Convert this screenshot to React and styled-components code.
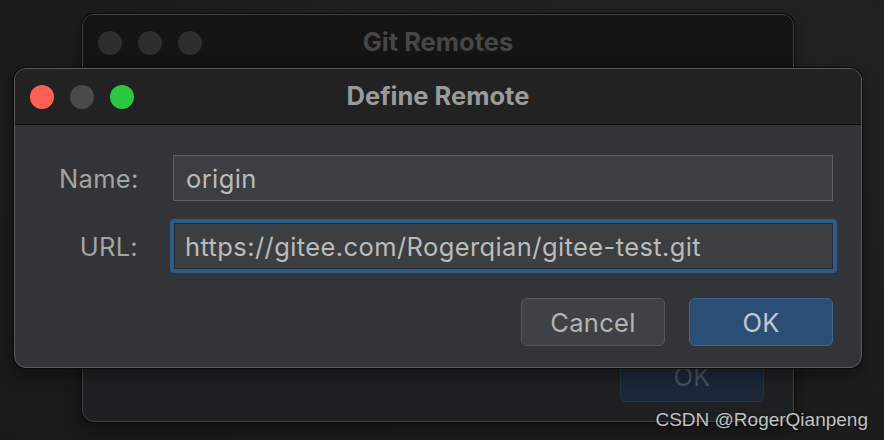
import React from "react"
import styled, { createGlobalStyle } from "styled-components"

const Global = createGlobalStyle`
  html, body {
    margin: 0;
    padding: 0;
    background: #1d1d1d;
  }
  body {
    font-family: Inter, "Noto Sans", "Liberation Sans", sans-serif;
  }
`

const Desktop = styled.div`
  position: relative;
  width: 884px;
  height: 440px;
  overflow: hidden;
  background: radial-gradient(ellipse at 75% 20%, #252525 0%, #1e1e1e 45%, #191919 100%);
`

const Window = styled.div`
  position: absolute;
  left: ${p => p.x}px;
  top: ${p => p.y}px;
  width: ${p => p.w}px;
  height: ${p => p.h}px;
  display: flex;
  flex-direction: column;
  border-radius: 12px;
  overflow: hidden;
  border: 1px solid ${p => (p.front ? "#5c5c5c" : "#444")};
  box-shadow: 0 0 0 1px #0a0a0a, 0 6px 18px rgba(0, 0, 0, 0.45);
  background: ${p => (p.front ? "#323437" : "#1f2022")};
  box-sizing: border-box;
`

const TitleBar = styled.div`
  position: relative;
  height: 55px;
  flex: none;
  display: flex;
  align-items: center;
  justify-content: center;
  background: ${p => (p.front ? "#222222" : "#141414")};
  border-bottom: 1px solid #0c0c0c;
`

const Lights = styled.div`
  position: absolute;
  left: 15px;
  top: 0;
  bottom: 0;
  display: flex;
  align-items: center;
  gap: 16px;
`

const Light = styled.span`
  width: 24px;
  height: 24px;
  border-radius: 50%;
  background: ${p => p.color};
`

const Title = styled.div`
  font-size: 25.5px;
  font-weight: 700;
  color: ${p => (p.front ? "#9b9b9b" : "#464646")};
  margin-top: -3px;
`

const Body = styled.div`
  flex: 1;
  display: flex;
  flex-direction: column;
  padding: 30px 28px 0 44px;
`

const Form = styled.div`
  display: grid;
  grid-template-columns: 79px 1fr;
  column-gap: 35px;
  row-gap: 18px;
  align-items: center;
`

const Label = styled.label`
  text-align: right;
  font-size: 25.5px;
  letter-spacing: 0.3px;
  color: #a4a4a4;
`

const Input = styled.div`
  box-sizing: border-box;
  display: flex;
  align-items: center;
  padding: 0 12px;
  background: #3c3f41;
  font-size: 25.5px;
  letter-spacing: 0.4px;
  color: #bbbbbb;
  border: 1px solid #5e6060;
  margin: ${p => (p.focus ? "0 -4px 0 -3px" : "0")};
  height: ${p => (p.focus ? "54px" : "46px")};
  ${p =>
    p.focus &&
    `
    border: 4px solid #2f5a88;
    border-radius: 4px;
    box-shadow: inset 0 0 0 1px #242c36;
    padding: 0 11px;
  `}
`

const Buttons = styled.div`
  display: flex;
  justify-content: flex-end;
  gap: 24px;
  margin-top: 25px;
`

const Button = styled.div`
  width: 144px;
  height: 48px;
  box-sizing: border-box;
  border-radius: 6px;
  display: flex;
  align-items: center;
  justify-content: center;
  font-size: 25.5px;
  letter-spacing: 0.3px;
  color: ${p => (p.primary ? "#c4c8cc" : "#b3b3b3")};
  background: ${p => (p.primary ? "#2b4e76" : "#3f4244")};
  border: 1px solid ${p => (p.primary ? "#3b6792" : "#55585a")};
`

const BackButton = styled(Button)`
  position: absolute;
  left: 537px;
  bottom: 19px;
  height: 52px;
  background: #1b2838;
  border-color: #24364a;
  color: #4a525c;
`

const Watermark = styled.div`
  position: absolute;
  right: 16px;
  bottom: 9px;
  font-family: "Liberation Sans", Arial, sans-serif;
  font-size: 19px;
  color: #c2c2c2;
  text-shadow: 0 0 2px rgba(0, 0, 0, 0.6);
`

const App = () => (
  <Desktop>
    <Global />
    <Window x={82} y={14} w={712} h={408}>
      <TitleBar>
        <Lights>
          <Light color="#2e2e2e" />
          <Light color="#2e2e2e" />
          <Light color="#2e2e2e" />
        </Lights>
        <Title>Git Remotes</Title>
      </TitleBar>
      <BackButton primary>OK</BackButton>
    </Window>
    <Window front x={14} y={68} w={848} h={300}>
      <TitleBar front>
        <Lights>
          <Light color="#fe5f57" />
          <Light color="#4a4a4a" />
          <Light color="#2ac840" />
        </Lights>
        <Title front>Define Remote</Title>
      </TitleBar>
      <Body>
        <Form>
          <Label>Name:</Label>
          <Input>origin</Input>
          <Label>URL:</Label>
          <Input focus>https://gitee.com/Rogerqian/gitee-test.git</Input>
        </Form>
        <Buttons>
          <Button>Cancel</Button>
          <Button primary>OK</Button>
        </Buttons>
      </Body>
    </Window>
    <Watermark>CSDN @RogerQianpeng</Watermark>
  </Desktop>
)

export default App
